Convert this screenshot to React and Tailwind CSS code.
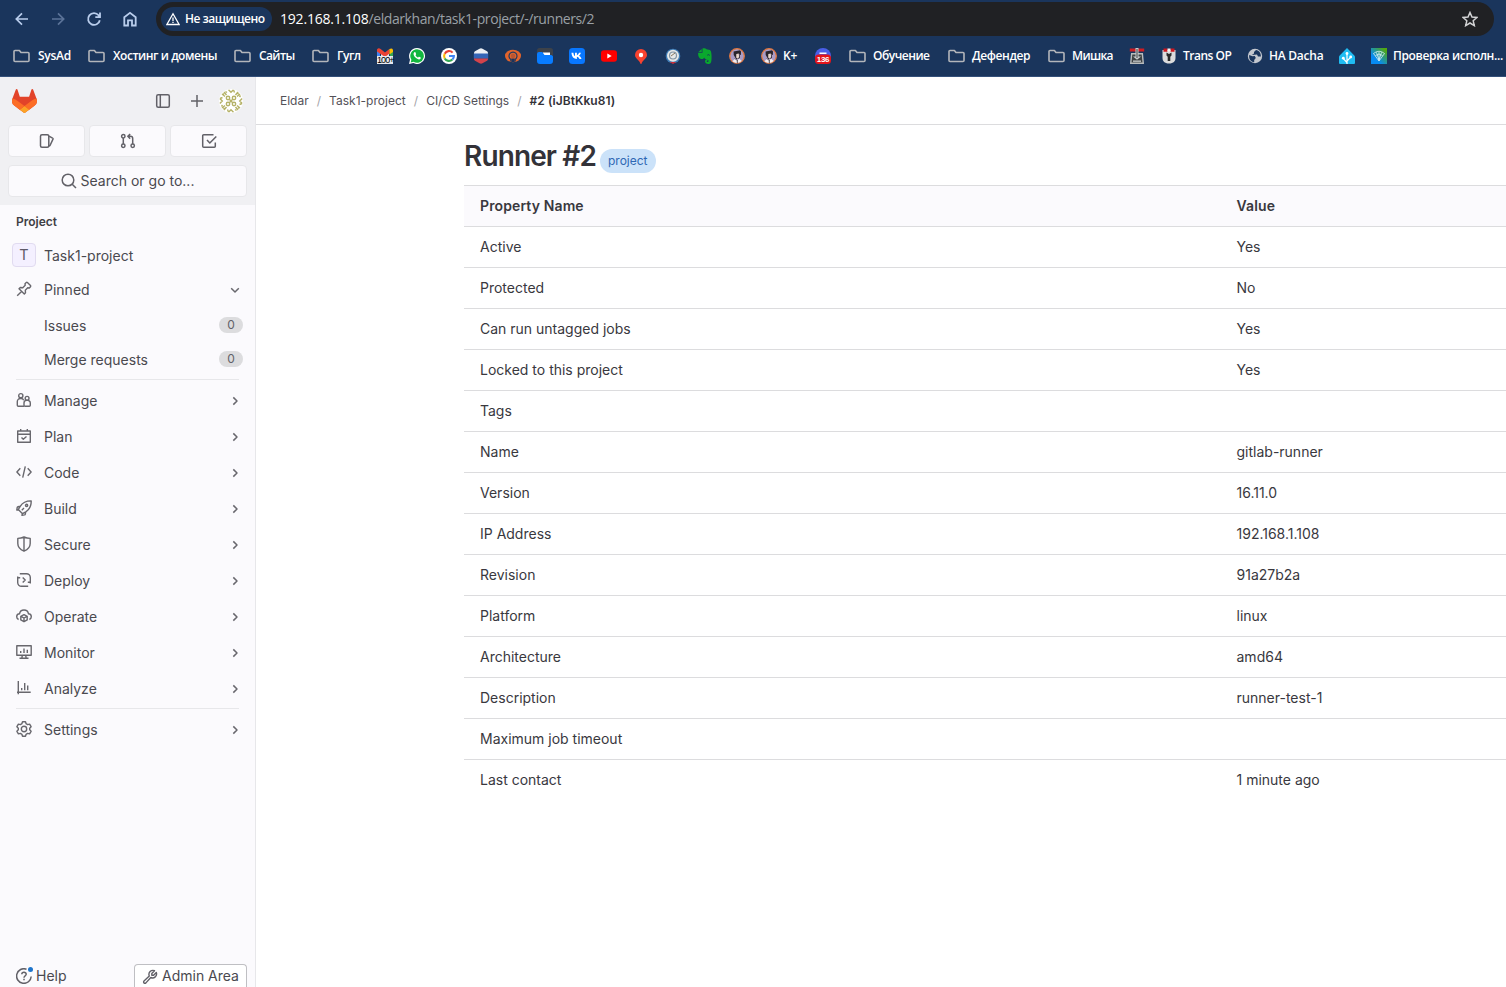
import React from "react";

const Icon = ({ children, className = "size-4", sw = 1.5 }) => (
  <svg viewBox="0 0 16 16" className={`shrink-0 ${className}`} fill="none" stroke="currentColor" strokeWidth={sw} strokeLinejoin="round">
    {children}
  </svg>
);

const Folder = () => (
  <svg viewBox="0 0 17 16" className="h-4 w-[17px] shrink-0" fill="none" stroke="#b3b6bb" strokeWidth="1.6">
    <path d="M1 3.500a1 1 0 0 1 1-1h4.400L8 4.500h7a1 1 0 0 1 1 1v7a1 1 0 0 1-1 1H2a1 1 0 0 1-1-1Z" strokeLinejoin="round" />
  </svg>
);

const Fav = ({ children }) => (
  <svg viewBox="0 0 16 16" className="size-4 shrink-0">{children}</svg>
);

const Gmail = () => (
  <div className="relative size-4 shrink-0">
    <svg viewBox="0 0 16 16" className="size-4">
      <path d="M0 2h3v10H0z" fill="#4285f4" />
      <path d="M13 2h3v10h-3z" fill="#34a853" />
      <path d="M4 5l4 3 4-3v5H4z" fill="#dfe3ea" />
      <path d="M0 1.500Q1.500-.5 3.600 1L8 4.600 12.400 1v4.600L8 9 0 3.400z" fill="#ea4335" />
      <path d="M12.400 1Q15-.5 16 1.800V4l-3.600 2.600z" fill="#fbbc04" />
      <path d="M0 8h16v8H0z" fill="#e6e9ef" />
    </svg>
    <span className="absolute left-0 top-[8px] font-['Liberation_Sans'] text-[9px] leading-[8px] font-normal tracking-[-0.9px] text-black">100+</span>
  </div>
);

const WhatsApp = () => (
  <Fav>
    <path d="M8 0a8 8 0 1 1-3.700 15.100L0 16l1-4.200A8 8 0 0 1 8 0Z" fill="#fff" />
    <path d="M8 1.200a6.800 6.800 0 1 1-3.500 12.600l-2.800.6.7-2.700A6.800 6.800 0 0 1 8 1.200Z" fill="#12b73f" />
    <path d="M5.400 4.200c-1.600 1.200-.6 3.600 1.100 5.300s3.900 2.600 5 1.200c.6-.8.3-1.200-.2-1.400l-1.200-.6c-.5-.2-.8.9-1.300.7C7.700 9 7 8.200 6.600 7.300c-.2-.4.700-.8.5-1.300l-.6-1.400c-.2-.5-.7-.6-1.100-.4Z" fill="#fff" />
  </Fav>
);

const Google = () => (
  <Fav>
    <circle cx="8" cy="8" r="8" fill="#fff" />
    <g fill="none" strokeWidth="2.100">
      <path d="M11.600 4.600A4.900 4.900 0 0 0 3.700 5.700" stroke="#ea4335" />
      <path d="M3.700 5.700a4.900 4.900 0 0 0 0 4.700" stroke="#fbbc05" />
      <path d="M3.700 10.400a4.900 4.900 0 0 0 7.700 1.200" stroke="#34a853" />
      <path d="M8 8h4.900a4.900 4.900 0 0 1-1.500 3.600" stroke="#4285f4" />
    </g>
  </Fav>
);

const Flag = () => (
  <Fav>
    <path d="M6.500.7Q8-.2 9.500.7l4.500 2.500q1 .7 1 2V6H1v-.8q0-1.300 1-2z" fill="#edf0f4" />
    <path d="M.8 5.500h14.400v5.200H.8z" fill="#3565b7" />
    <path d="M1 10.500h14v.6q0 1-1 1.600l-4.500 2.600q-1.500.8-3 0L2 12.700q-1-.6-1-1.600z" fill="#d3434b" />
  </Fav>
);

const Ring = () => (
  <Fav>
    <ellipse cx="8" cy="8" rx="8" ry="6.200" fill="#e1642c" />
    <path d="M5.800 13.500V11.400a4 4 0 1 1 4.400 0v2.100" fill="none" stroke="#233a60" strokeWidth="1.200" />
    <path d="M6.300 10.500h3.400V14H6.300z" fill="#1a355c" />
    <circle cx="8" cy="8" r="2.200" fill="#b85632" />
  </Fav>
);

const Files = () => (
  <Fav>
    <rect width="16" height="9" rx="2.500" fill="#3d4249" />
    <path d="M6 4.500h7V8H6z" fill="#fff" />
    <path d="M0 6a2 2 0 0 1 2-2h3.300L7.500 7H14a2 2 0 0 1 2 1.500V13a3 3 0 0 1-3 3H3a3 3 0 0 1-3-3z" fill="#087cff" />
  </Fav>
);

const VK = () => (
  <Fav>
    <rect width="16" height="16" rx="3.500" fill="#0877ff" />
    <path d="M2.500 4.800h1.900c.1 2 .9 3.100 1.600 3.300V4.800h1.900v2.400c1-.2 1.800-1.300 2.100-2.400h1.900c-.3 1.500-1.200 2.400-1.900 2.900.8.500 2 1.300 2.500 3.300h-2c-.4-1.200-1.300-2-2.600-2.200v2.200C4.800 11 2.700 9 2.500 4.800Z" fill="#fff" />
  </Fav>
);

const YouTube = () => (
  <Fav>
    <rect y="2.200" width="16" height="11.600" rx="3" fill="#f00" />
    <path d="M6.300 5.500v5L10.700 8z" fill="#fff" />
  </Fav>
);

const MapPin = () => (
  <Fav>
    <path d="M8 1a6 6 0 0 1 6 6c0 3.500-4.300 4.600-5.600 9h-.8C6.300 11.600 2 10.500 2 7a6 6 0 0 1 6-6Z" fill="#f8422f" />
    <circle cx="8" cy="7" r="2.200" fill="#fff" />
  </Fav>
);

const Seal = () => (
  <Fav>
    <circle cx="8" cy="8" r="7.300" fill="#3f7cb5" />
    <circle cx="8" cy="7.800" r="6" fill="#e6e8e8" />
    <circle cx="8" cy="7.500" r="3.500" fill="none" stroke="#7f93a3" strokeWidth="1.200" />
    <path d="M6 8l4-3" stroke="#86765d" />
    <path d="M4.500 14h7L8 16z" fill="#c52c37" />
  </Fav>
);

const Evernote = () => (
  <Fav>
    <path d="M5.500.5v4.300H1.200C.8 7 1.800 10.500 4 11c2 .4 3-.5 3.200-1.500.4 1.700 1.700 1.700 3.300 2 .9.200 1 1 .9 2-.2.7-1.500.8-1.700.1-.1-.8.500-1 1.100-1l-.2-1.400c-2-.1-2.700 1.100-2.500 2.500.2 1.900 2 2.400 3.900 2.200 2-.3 2.400-2 2.500-4.700.2-3 0-6.200-.7-8.200C13 1.500 10.600 1.700 9.500 1.300 8.800.5 6.800.1 5.500.5Z" fill="#0aa82e" />
    <path d="M4.700.9v3.200H1.500z" fill="#0aa82e" />
    <path d="M10.300 7.200q1.500-1.200 2.400.2" stroke="#1a355c" fill="none" />
  </Fav>
);

const Face = () => (
  <Fav>
    <circle cx="8" cy="8" r="7.300" fill="#a99bc6" stroke="#e2773e" strokeWidth="1.300" />
    <path d="M4.600 3.500l6.500-1.200 1 3.200-1.500.4.300 4.100-3.500 1.500L4.700 7z" fill="#29242c" />
    <path d="M7.300 6l2.500-.4.300 3.600-1.600 1.600-1.300-1.400z" fill="#e6d4cb" />
    <path d="M3.300 13.300l3-2.500 2 1.400 2-1.400 2.400 2.300Q8 17 3.300 13.300Z" fill="#f2eef0" />
    <path d="M8.300 12v3.500M11.500 3v4M6 10.500l2 2" stroke="#29242c" strokeWidth=".8" />
  </Fav>
);

const Counter = () => (
  <div className="relative size-4 shrink-0">
    <svg viewBox="0 0 16 16" className="size-4">
      <circle cx="8" cy="8" r="8" fill="#4a5fe8" />
      <path d="M4.500 4.500h7v1.500h-7z" fill="#fff" />
      <rect y="6.500" width="16" height="9.500" rx="3.500" fill="#e3151b" />
    </svg>
    <span className="absolute inset-x-0 top-[7px] text-center font-['Liberation_Sans'] text-[8px] leading-[9px] font-bold text-white">136</span>
  </div>
);

const Switch = () => (
  <Fav>
    <path d="M2 5h12l1 11H1z" fill="#b9bcbd" />
    <path d="M3.300 6.500h9.400l.8 8H2.500z" fill="#3e4244" />
    <path d="M.8.500h14.400v3H.8z" fill="#cf1d22" />
    <path d="M6.500 0h3v8.500H12l-4 3.300-4-3.300h2.500z" fill="#c9cdcf" />
    <path d="M7.500 1h1v9h-1z" fill="#3e4244" />
    <path d="M4 12.500h8v1.300H4z" fill="#c9cdcf" />
  </Fav>
);

const Robot = () => (
  <Fav>
    <path d="M1.500 2h13v8c0 3-2 5.500-6.500 5.500S1.500 13 1.500 10z" fill="#dcdcdc" />
    <path d="M2.500.500h4v3.200h-4zM9.500.500h4v3.200h-4z" fill="#cd171e" />
    <path d="M6.500.5h3v3h-3z" fill="#f2f2f2" />
    <path d="M5.500 4.500L8 6l2.500-1.500v3L9.300 8.700V13H6.700V8.700L5.500 7.500z" fill="#292929" />
  </Fav>
);

const Globe = () => (
  <Fav>
    <circle cx="8" cy="8" r="7.200" fill="#c3c7ce" />
    <path d="M2.200 7l3.400 1.200 2.200-.1 1 2L7.200 12v2.300C3.600 13.800 1.700 11 2.200 7ZM9 2.100L7 4v1.400L4.800 6.900l5.200-.4 1 2h2.900C14 5 12 2.500 9 2.100Z" fill="#1a355c" />
  </Fav>
);

const HomeAssistant = () => (
  <Fav>
    <path d="M8 0l8 8.300V15a1 1 0 0 1-1 1H1a1 1 0 0 1-1-1V8.300z" fill="#1fbcf2" />
    <path d="M8 6v10M8 14.500l-3.700-3.800M8 13l3.700-3.800" fill="none" stroke="#fff" strokeWidth="1.200" />
    <g fill="#fff"><circle cx="8" cy="5.500" r="1.400" /><circle cx="4.300" cy="10.200" r="1.400" /><circle cx="11.700" cy="9" r="1.400" /></g>
  </Fav>
);

const Fan = () => (
  <Fav>
    <defs><linearGradient id="fan" x1="0" y1="1" x2="1" y2="0"><stop offset=".3" stopColor="#078bf3" /><stop offset=".9" stopColor="#52a80d" /></linearGradient></defs>
    <rect width="16" height="16" fill="url(#fan)" />
    <path d="M2.500 5.500Q8 1 13.500 5.500L8 13zM4.500 7.500Q8 4.500 11.500 7.500M8 4v9M5.400 4.300L8 12l2.600-7.700" fill="none" stroke="#d9f1f5" strokeWidth=".8" />
  </Fav>
);

const bookmarks = [
  { icon: <Folder />, text: "SysAd", w: "w-[75px]", gap: "gap-2" },
  { icon: <Folder />, text: "Хостинг и домены", w: "w-[146px]", gap: "gap-2", t: "tracking-[-0.45px]" },
  { icon: <Folder />, text: "Сайты", w: "w-[78px]", gap: "gap-2", t: "tracking-[-0.6px]" },
  { icon: <Folder />, text: "Гугл", w: "w-[65px]", gap: "gap-2", t: "tracking-[-0.5px]" },
  { icon: <Gmail />, w: "w-8" },
  { icon: <WhatsApp />, w: "w-8" },
  { icon: <Google />, w: "w-8" },
  { icon: <Flag />, w: "w-8" },
  { icon: <Ring />, w: "w-8" },
  { icon: <Files />, w: "w-8" },
  { icon: <VK />, w: "w-8" },
  { icon: <YouTube />, w: "w-8" },
  { icon: <MapPin />, w: "w-8" },
  { icon: <Seal />, w: "w-8" },
  { icon: <Evernote />, w: "w-8" },
  { icon: <Face />, w: "w-8" },
  { icon: <Face />, text: "K+", w: "w-[54px]", gap: "gap-1.5" },
  { icon: <Counter />, w: "w-[34px]" },
  { icon: <Folder />, text: "Обучение", w: "w-[99px]", gap: "gap-[7px]", t: "tracking-[-0.5px]" },
  { icon: <Folder />, text: "Дефендер", w: "w-[100px]", gap: "gap-[7px]", t: "tracking-[-0.4px]" },
  { icon: <Folder />, text: "Мишка", w: "w-[81px]", gap: "gap-[7px]", t: "tracking-[-0.65px]" },
  { icon: <Switch />, w: "w-8" },
  { icon: <Robot />, text: "Trans OP", w: "w-[86px]", gap: "gap-1.5", t: "tracking-[-0.5px]" },
  { icon: <Globe />, text: "HA Dacha", w: "w-[92px]", gap: "gap-1.5" },
  { icon: <HomeAssistant />, w: "w-8" },
  { icon: <Fan />, text: "Проверка исполн...", w: "w-[135px]", gap: "gap-1.5", t: "tracking-[-0.35px]" },
];

const Browser = () => (
  <header className="flex h-[77px] shrink-0 flex-col border-b border-[#34507a] bg-[#1a355c] font-['Open_Sans','Noto_Sans',sans-serif]">
    <div className="flex h-[38px] items-center pl-3.5 pr-3 text-[#b9cdec]">
      <Icon sw={1.7}><path d="M14 8H2.500M8 2.300L2.300 8 8 13.700" strokeLinejoin="miter" /></Icon>
      <Icon sw={1.7} className="ml-5 size-4 text-[#5b7398]"><path d="M2 8h11.500M8 2.300L13.700 8 8 13.700" strokeLinejoin="miter" /></Icon>
      <Icon sw={1.8} className="ml-5 size-4"><path d="M13.800 9.200A5.900 5.900 0 1 1 12.600 4.300L14 5.900M14 1.500v4.600H9.300" strokeLinejoin="miter" /></Icon>
      <Icon sw={1.8} className="ml-5 size-4"><path d="M2.300 6.300L8 1.900l5.700 4.400v8.200H10V9.300H6v5.200H2.300z" strokeLinejoin="miter" /></Icon>
      <div className="ml-[18px] flex h-[34px] flex-1 items-center rounded-full bg-[#202124] pl-[5px] pr-4">
        <div className="flex h-6 w-[111px] items-center gap-[5px] rounded-full bg-[#1a355c] pl-[5px] text-[12px] font-semibold whitespace-nowrap text-white">
          <Icon sw={1.5} className="size-[14px]"><path d="M8 2L15 14.300H1zM8 6.300v4M8 11.200v1.500" strokeLinejoin="miter" /></Icon>
          <span className="tracking-[-0.5px]">Не защищено</span>
        </div>
        <div className="ml-2 flex-1 pb-0.5 text-[14px] tracking-[-0.42px] whitespace-nowrap text-[#9aa0a6]">
          <span className="tracking-[-0.2px] text-white">192.168.1.108</span>/eldarkhan/task1-project/-/runners/2
        </div>
        <Icon sw={1.5} className="size-4 text-[#d2d3d5]"><path d="M8 1.500l2 4.600 4.900.4-3.700 3.300 1.100 4.800L8 12l-4.300 2.600 1.100-4.800L1.100 6.500 6 6.100z" strokeLinejoin="miter" /></Icon>
      </div>
    </div>
    <div className="flex h-9 items-center pl-[13px] text-[12px] font-semibold text-white">
      {bookmarks.map((b, i) => (
        <div key={i} className={`flex shrink-0 items-center whitespace-nowrap ${b.w} ${b.gap || ""} ${b.t || "tracking-[-0.25px]"}`}>
          {b.icon}
          {b.text && <span>{b.text}</span>}
        </div>
      ))}
    </div>
  </header>
);

const Tanuki = () => (
  <svg viewBox="0 0 25 24" className="h-6 w-[25px]">
    <path d="m24.507 9.5-.034-.09L21.082.562a.896.896 0 0 0-1.694.091l-2.29 7.01H7.825L5.535.653a.898.898 0 0 0-1.694-.09L.451 9.411.416 9.5a6.297 6.297 0 0 0 2.09 7.278l.012.01.03.022 5.16 3.867 2.56 1.935 1.554 1.176a1.051 1.051 0 0 0 1.268 0l1.555-1.176 2.56-1.935 5.197-3.89.014-.01A6.297 6.297 0 0 0 24.507 9.5Z" fill="#E24329" />
    <path d="m24.507 9.5-.034-.09a11.44 11.44 0 0 0-4.56 2.051l-7.447 5.632 4.742 3.584 5.197-3.89.014-.01A6.297 6.297 0 0 0 24.507 9.5Z" fill="#FC6D26" />
    <path d="m7.707 20.677 2.56 1.935 1.555 1.176a1.051 1.051 0 0 0 1.268 0l1.555-1.176 2.56-1.935-4.743-3.584-4.755 3.584Z" fill="#FCA326" />
    <path d="M5.01 11.461a11.43 11.43 0 0 0-4.56-2.05L.416 9.5a6.297 6.297 0 0 0 2.09 7.278l.012.01.03.022 5.16 3.867 4.745-3.584-7.444-5.632Z" fill="#FC6D26" />
  </svg>
);

const Identicon = () => (
  <svg viewBox="0 0 24 24" className="size-6 rounded-full bg-white" fill="none" stroke="#b5b268" strokeWidth="1.400">
    {[0, 90, 180, 270].map((a) => (
      <g key={a} transform={`rotate(${a} 12 12)`}>
        <circle cx="9" cy="9" r="1.700" />
        <path d="M10.300 10.300L12 12M9.500.8l2.500 2.500L14.500.8M5 3l2.500 3M3 5l3 2.500M4.500 6.500V4.200M1 9.500l2.500-1M8 3.500l-1.500-1" />
      </g>
    ))}
  </svg>
);

const ICONS = {
  pin: <path d="M1.200 14.800L5.800 10.200M10.300 1.500a.8.800 0 0 1 1.100 0l3.100 3.100a.8.800 0 0 1 0 1.100L13.300 7l-1.600-.2-2.400 2.400.2 2.500-1.200 1.300L3 7.700l1.300-1.200 2.500.2 2.400-2.400L9 2.700z" />,
  manage: <><circle cx="4.800" cy="3.700" r="2.100" /><path d="M8 14.300H2.300a1 1 0 0 1-1-1V9.500a3 3 0 0 1 3-3h.8a2.900 2.900 0 0 1 2.600 1.700" /><circle cx="11.100" cy="6.300" r="1.900" /><path d="M8 13.300V11a2.600 2.600 0 0 1 2.600-2.600h1A2.600 2.600 0 0 1 14.300 11v2.300a1 1 0 0 1-1 1H9a1 1 0 0 1-1-1Z" /></>,
  plan: <path d="M1.700 3h12.600v11.300H1.700zM1.700 6.200h12.600M4.700 1v2M11.300 1v2M5.500 9.500l1.800 1.800L10.500 8.500" />,
  code: <path d="M4.300 4.300L.9 8l3.400 3.700M11.700 4.300L15.100 8l-3.400 3.700M9.300 2.300L6.700 13.700" />,
  build: <><path d="M9.800 11.900c3.800-2.500 5.500-6 5.400-11-5-.1-8.500 1.600-11 5.400L2.300 9.500l4.200 4.200zM4.200 6.300l-2.200.4a1 1 0 0 0-.8.800L.8 10l1.700-.3M9.700 11.900l-.4 2.200a1 1 0 0 1-.8.800L6 15.300l.3-1.700M5.800 10.200L8 8" /><circle cx="10.600" cy="5.400" r="1.100" /></>,
  secure: <path d="M8 1c2 1 4 1.400 6.200 1.400v5c0 3.700-2.700 6.200-6.200 7.800-3.500-1.600-6.200-4.100-6.200-7.800v-5C4 2.400 6 2 8 1zM8 1v14" />,
  deploy: <path d="M3.800 1.700h6.700a3.800 3.800 0 0 1 3.800 3.800v6M14.300 10.300h-2.500M12.200 14.300H5.500a3.800 3.800 0 0 1-3.800-3.800v-6M1.700 5.700h2.500M6.700 5.500L9.200 8l-2.500 2.500" />,
  operate: <><path d="M2.600 11.500C1.400 10.900.7 10 .7 8.700A3 3 0 0 1 3.500 5.800C3.900 3.600 5.600 2 8 2s4.100 1.600 4.500 3.800a3 3 0 0 1 2.800 2.900c0 1.300-.7 2.200-1.900 2.800" /><path d="M8 6.600l3.200 1.700v3.600L8 13.700l-3.200-1.800V8.300zM4.800 8.300L8 10l3.200-1.700M8 10v3.700" /></>,
  monitor: <path d="M.8 1.700h14.400v9.600H.8zM3.500 14.300h9M6.300 11.300l-.5 3M9.700 11.300l.5 3M4.700 7v2M8 4.500V9M11.300 5.800V9" />,
  analyze: <path d="M2.300 1v13.300M1 12.300h13.700M5.700 8v2.300M8.700 3v7.300M11.700 5.500v4.800" />,
  settings: <><path d="M6.500.8h3l.6 1.900 1.500.9 2-.5 1.500 2.600L13.700 7.200v1.600l1.400 1.500-1.500 2.600-2-.5-1.500.9-.6 1.900h-3l-.6-1.900-1.500-.9-2 .5-1.500-2.600 1.400-1.500V7.200L.9 5.700l1.500-2.600 2 .5 1.500-.9z" /><circle cx="8" cy="8" r="2.700" /></>,
};

const NavRow = ({ icon, label, open }) => (
  <div className={`flex items-center pl-4 pr-3 ${open ? "h-[34px]" : "h-9"}`}>
    <Icon className="-mt-0.5 size-4 text-[#68676d]" sw={1.4}>{ICONS[icon]}</Icon>
    <span className="ml-3 flex-1 pb-0.5">{label}</span>
    <Icon className="size-4 text-[#68676d]" sw={1.5}>
      <path d={open ? "M4.200 6.200L8 10l3.800-3.800" : "M6.300 4.400L10 8l-3.700 3.600"} />
    </Icon>
  </div>
);

const PinnedRow = ({ label }) => (
  <div className="flex h-[34px] items-center justify-between pl-11 pr-3">
    <span className="pb-0.5">{label}</span>
    <span className="-mt-0.5 flex h-4 w-6 items-center justify-center rounded-full bg-[#dcdcde] text-[12px] leading-4 text-[#626168]">0</span>
  </div>
);

const TopButton = ({ children }) => (
  <div className="flex h-8 flex-1 items-center justify-center rounded border border-[#e7e7ea] bg-[#fbfafd] text-[#626168]">
    <Icon>{children}</Icon>
  </div>
);

const nav = [
  ["manage", "Manage"], ["plan", "Plan"], ["code", "Code"], ["build", "Build"], ["secure", "Secure"],
  ["deploy", "Deploy"], ["operate", "Operate"], ["monitor", "Monitor"], ["analyze", "Analyze"],
];

const Sidebar = () => (
  <aside className="flex w-64 shrink-0 flex-col border-r border-[#e7e7ea] bg-[#fbfafd] text-[14px] text-[#4a494f]">
    <div className="flex h-32 shrink-0 flex-col bg-[#f0f0f3] px-2">
      <div className="flex h-12 items-center pl-1 pr-1 text-[#626168]">
        <Tanuki />
        <Icon className="ml-auto size-4"><rect x="1.700" y="1.700" width="12.600" height="12.600" rx="1.500" /><path d="M5.300 2v12" /></Icon>
        <Icon className="ml-[18px] mr-3.5 size-4"><path d="M8 2v12M2 8h12" /></Icon>
        <Identicon />
      </div>
      <div className="flex gap-1">
        <TopButton><rect x="1.500" y="1.700" width="8.300" height="12.600" rx="1.500" /><path d="M10 3.200l3.600 1.900a.8.800 0 0 1 .4 1L11 12.500l-1.200.5" /></TopButton>
        <TopButton><circle cx="3.300" cy="3.300" r="1.700" /><circle cx="3.300" cy="12.700" r="1.700" /><circle cx="12.700" cy="12.700" r="1.700" /><path d="M3.300 5v6M12.700 11V5.500A2.200 2.200 0 0 0 10.500 3.300H8M10.200 1L7.800 3.300l2.400 2.300" /></TopButton>
        <TopButton><path d="M12.500 1.700H2.700a1 1 0 0 0-1 1v10.600a1 1 0 0 0 1 1h10.600a1 1 0 0 0 1-1V9.500M6 7l2.800 3L15.300 3.500" /></TopButton>
      </div>
      <div className="mt-2 flex h-8 items-center justify-center gap-1 rounded border border-[#e7e7ea] bg-[#fbfafd]">
        <Icon className="size-4 text-[#626168]"><circle cx="7" cy="7" r="5.800" /><path d="M11.200 11.200L15 15" /></Icon>
        <span className="pb-0.5">Search or go to...</span>
      </div>
    </div>
    <div className="flex h-[34px] items-center pl-4 text-[12px] font-semibold text-[#3f3e44]">Project</div>
    <div className="flex h-[34px] items-center pl-3">
      <div className="-mt-0.5 flex size-6 items-center justify-center rounded border border-[#e1dbf0] bg-[#f4f0ff] pb-px text-[14.5px] text-[#5d5a68]">T</div>
      <span className="ml-2 pb-0.5">Task1-project</span>
    </div>
    <NavRow icon="pin" label="Pinned" open />
    <div className="mt-0.5">
      <PinnedRow label="Issues" />
      <PinnedRow label="Merge requests" />
    </div>
    <div className="mx-4 mt-0.5 mb-[3px] h-px shrink-0 bg-[#e7e7ea]" />
    {nav.map(([icon, label]) => <NavRow key={label} icon={icon} label={label} />)}
    <div className="mx-4 mt-px mb-[3px] h-px shrink-0 bg-[#e7e7ea]" />
    <NavRow icon="settings" label="Settings" />
    <div className="mt-auto -mb-px flex h-6 shrink-0 items-center justify-between pl-4 pr-2">
      <div className="flex items-center gap-1">
        <div className="relative">
          <Icon className="size-4 text-[#626168]"><path d="M10.500 1.200A7.300 7.300 0 1 0 15.200 8.500M5.800 6.200C5.900 3.600 10.300 3.700 10.200 6.300 10.100 8 8 7.700 8 9.700M8 10.700v1.500" /></Icon>
          <span className="absolute -top-px -right-px size-[5px] rounded-full bg-[#1f75cb]" />
        </div>
        <span className="pb-0.5">Help</span>
      </div>
      <div className="flex h-6 w-[113px] items-center justify-center gap-1 rounded-t border border-b-0 border-[#bfbfc3] bg-white whitespace-nowrap">
        <Icon className="size-4 text-[#626168]" sw={1.4}><path d="M12.500 1.700L9.800 4.400v1.800h1.800l2.700-2.700a4 4 0 0 1-5.500 5L3.900 13.900a1.300 1.300 0 0 1-1.900-1.900l5.300-5A4 4 0 0 1 12.500 1.700Z" /></Icon>
        <span className="pb-0.5">Admin Area</span>
      </div>
    </div>
  </aside>
);

const rows = [
  ["Active", "Yes"], ["Protected", "No"], ["Can run untagged jobs", "Yes"], ["Locked to this project", "Yes"],
  ["Tags", ""], ["Name", "gitlab-runner"], ["Version", "16.11.0"], ["IP Address", "192.168.1.108"],
  ["Revision", "91a27b2a"], ["Platform", "linux"], ["Architecture", "amd64"], ["Description", "runner-test-1"],
  ["Maximum job timeout", ""], ["Last contact", "1 minute ago"],
];

const Main = () => (
  <main className="min-w-0 flex-1">
    <nav className="flex h-12 items-center gap-2 border-b border-[#dcdcde] pl-6 text-[12px] text-[#535158]">
      <span>Eldar</span><span className="text-[#a4a3a8]">/</span>
      <span className="tracking-[0.02px]">Task1-project</span><span className="text-[#a4a3a8]">/</span>
      <span>CI/CD Settings</span><span className="text-[#a4a3a8]">/</span>
      <span className="font-semibold tracking-[0.06px] text-[#333238]">#2 (iJBtKku81)</span>
    </nav>
    <div className="pl-52">
      <div className="flex h-[60px] items-start whitespace-nowrap">
        <h1 className="mt-[13px] w-[136px] text-[28px] leading-9 font-semibold tracking-[-0.88px] text-[#333238]">Runner #2</h1>
        <span className="mt-6 flex h-6 items-center rounded-full bg-[#cbe2f9] px-2 text-[12px] text-[#2f68b4]">project</span>
      </div>
      <div className="text-[14px] text-[#39383e]">
        <div className="flex h-[42px] items-center border-y border-[#dcdcde] bg-[#fbfafd] pb-0.5 pl-4 font-semibold tracking-[0.12px]">
          <span className="w-[756.500px]">Property Name</span><span>Value</span>
        </div>
        {rows.map(([k, v]) => (
          <div key={k} className="flex h-[41px] items-center border-b border-[#dcdcde] pb-0.5 pl-4 last:border-b-0">
            <span className="w-[756.500px]">{k}</span><span>{v}</span>
          </div>
        ))}
      </div>
    </div>
  </main>
);

export default function App() {
  return (
    <div className="flex h-[987px] w-[1506px] flex-col overflow-hidden bg-white font-['Inter',sans-serif]">
      <Browser />
      <div className="flex min-h-0 flex-1">
        <Sidebar />
        <Main />
      </div>
    </div>
  );
}
